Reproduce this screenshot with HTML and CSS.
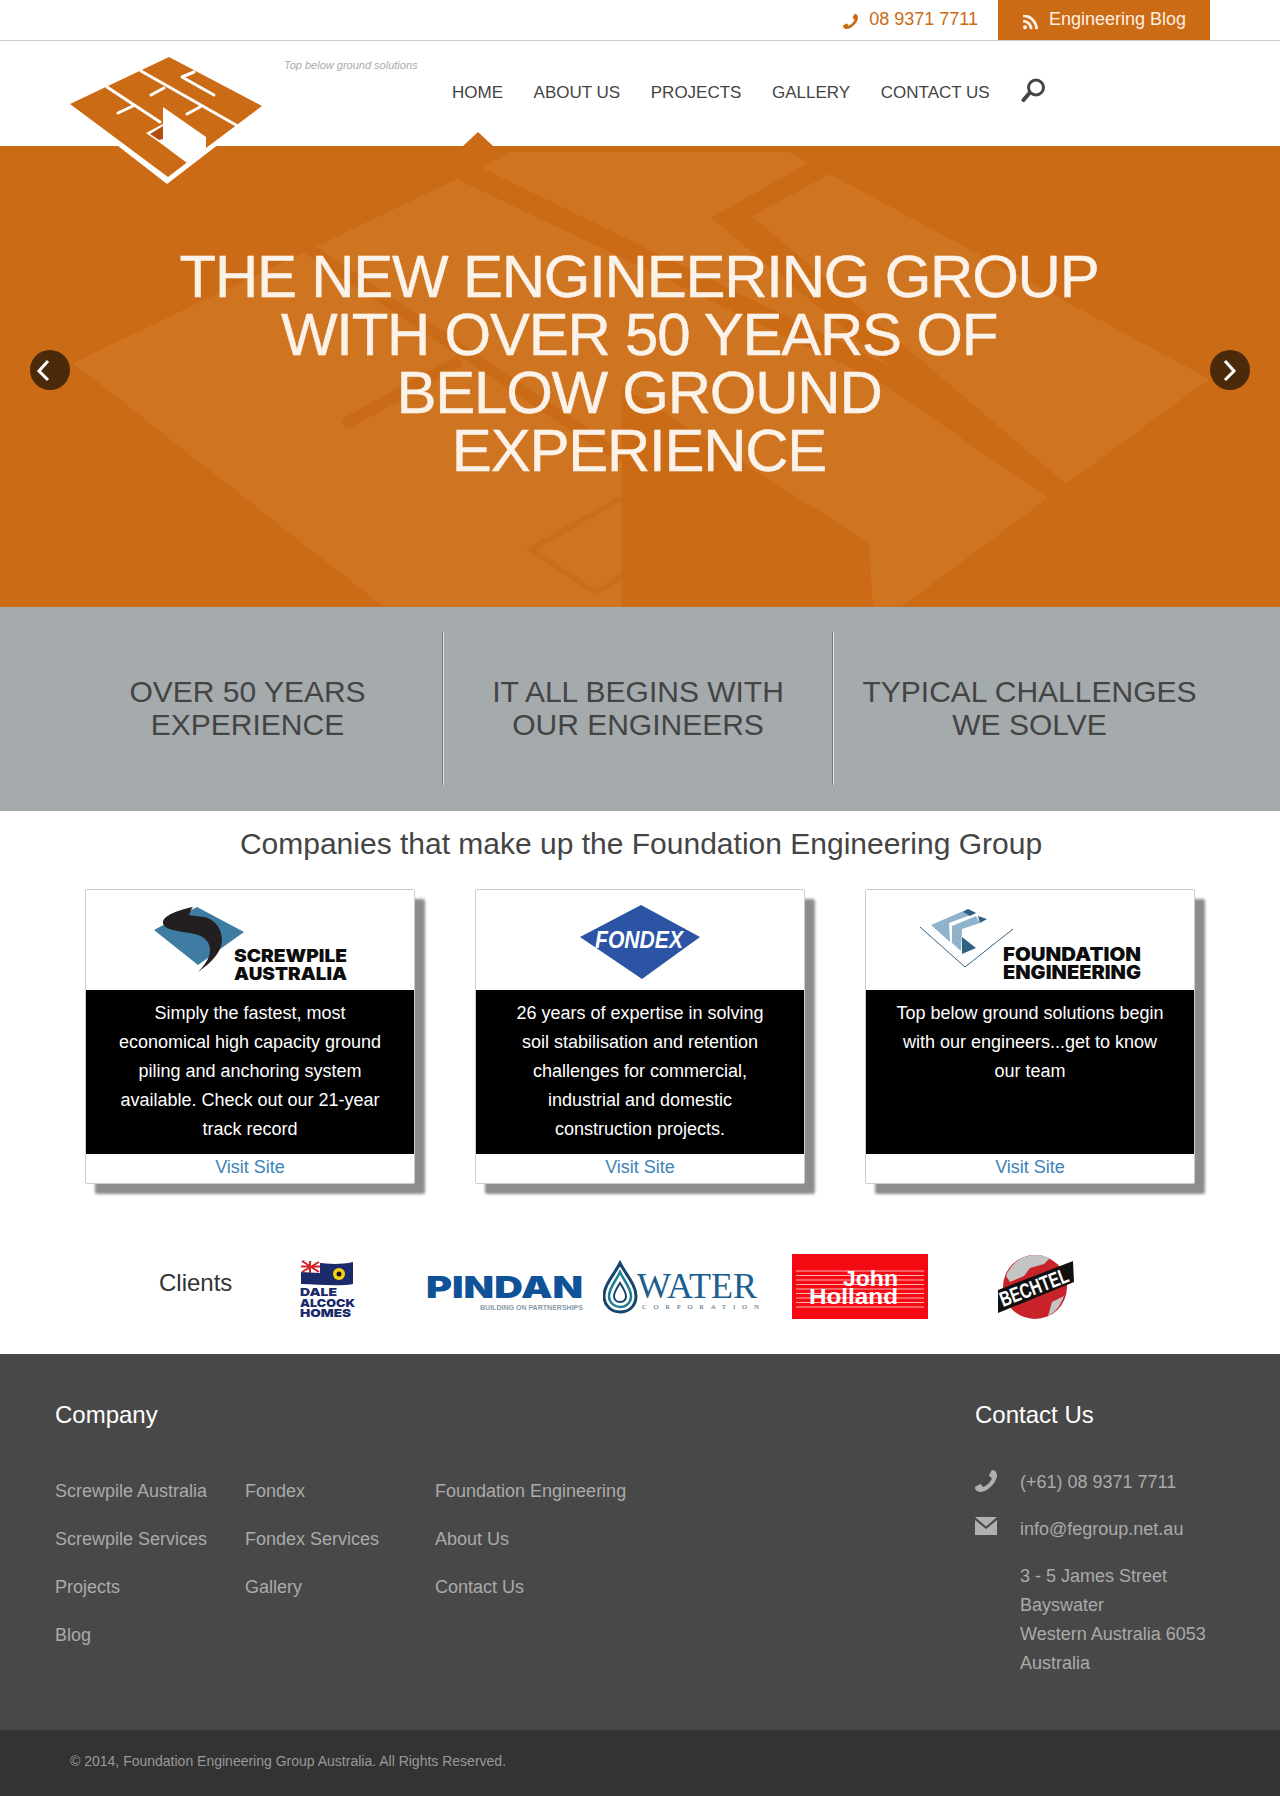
FILE: index.html
```html
<!DOCTYPE html>
<html lang="en">
<head>
<meta charset="utf-8">
<title>Foundation Engineering Group</title>
<link rel="stylesheet" href="styles.css">
</head>
<body>
<header class="header">
  <div class="topbar">
    <a class="top-phone" href="#">
      <svg class="icon-phone-top" viewBox="192 128 1408 1408"><path class="mirror" d="M1600 1240q0 27-10 70.5t-21 68.5q-21 50-122 106-94 51-186 51-27 0-53-3.5t-57.5-12.5-47-14.5-55.5-20.5-49-18q-98-35-175-83-127-79-264-216t-216-264q-48-77-83-175-3-9-18-49t-20.5-55.5-14.5-47-12.5-57.5-3.5-53q0-92 51-186 56-101 106-122 25-11 68.5-21t70.5-10q14 0 21 3 18 6 53 76 11 19 30 54t35 63.5 31 53.5q3 4 17.5 25t21.5 35.5 7 28.5q0 20-28.5 50t-62 55-62 53-28.5 46q0 9 5 22.5t8.5 20.5 14 24 11.5 19q76 137 174 235t235 174q2 1 19 11.5t24 14 20.5 8.5 22.5 5q18 0 46-28.5t53-62 55-62 50-28.5q14 0 28.5 7t35.5 21.5 25 17.5q25 15 53.5 31t63.5 35 54 30q70 35 76 53 3 7 3 21z"/></svg>
      <span>08 9371 7711</span>
    </a>
    <a class="top-blog" href="#">
      <svg class="icon-rss" viewBox="192 192 1408 1408"><path d="M576 1344q0 80-56 136t-136 56-136-56-56-136 56-136 136-56 136 56 56 136zm512 123q2 28-17 48-18 21-47 21h-135q-25 0-43-16.5t-20-41.5q-22-229-184.5-391.5t-391.5-184.5q-25-2-41.5-20t-16.5-43v-135q0-29 21-47 17-17 43-17h5q160 13 306 80.5t259 181.5q114 113 181.5 259t80.5 306zm512 2q2 27-18 47-18 20-46 20h-143q-26 0-44.5-17.5t-19.5-42.5q-12-215-101-408.5t-231.5-336-336-231.5-408.5-102q-25-1-42.5-19.5t-17.5-43.5v-143q0-28 20-46 18-18 44-18h3q262 13 501.5 120t425.5 294q187 186 294 425.5t120 501.5z"/></svg>
      <span>Engineering Blog</span>
    </a>
  </div>
  <div class="navrow">
    <svg class="logo" viewBox="68 55 196 131">
      <polygon class="logo-white" points="100,132 167,184 232,134 169,57"/>
      <polygon class="logo-orange" points="70,104 169,57 262,106 206,148 168,177"/>
      <polygon class="logo-white" points="163,107 206,137 206,148 187,163 159,142 146,133 163,124"/>
      <polygon class="logo-dark" points="150,134 163,126 163,139 159,140"/>
      <path class="logo-slit" d="M141 71 236 125M107 87 160 122M118 113 133 106M151 95 164 88M187 114 200 107M194 72 182 77 214 95"/>
    </svg>
    <p class="tagline">Top below ground solutions</p>
    <nav class="nav">
      <a class="nav-link active" href="#">HOME</a>
      <a class="nav-link" href="#">ABOUT US</a>
      <a class="nav-link" href="#">PROJECTS</a>
      <a class="nav-link" href="#">GALLERY</a>
      <a class="nav-link" href="#">CONTACT US</a>
      <svg class="icon-search" viewBox="0 0 26 24"><circle cx="16" cy="9.5" r="7.5"/><path d="M9.5 15 3.5 22"/></svg>
    </nav>
  </div>
</header>

<section class="hero">
  <svg class="hero-art" viewBox="0 0 1280 461" preserveAspectRatio="none">
    <polygon class="lit" points="73,217 457,33 622,112 880,236 1048,352 901,461 873,461 869,397 622,240 622,461 384,461"/>
    <polygon class="lit" points="482,22 510,6 788,6 808,17 711,72 892,222"/>
    <polygon class="lit" points="830,28 1209,233 1066,338 752,70"/>
    <path class="cut-thin" d="M622 352 531 403 596 447 622 430"/>
    <path class="cut" d="M300 97 622 312M343 279 460 215"/>
  </svg>
  <h1 class="hero-title">THE NEW ENGINEERING GROUP<br>WITH OVER 50 YEARS OF<br>BELOW GROUND<br>EXPERIENCE</h1>
  <a class="slide-btn prev" href="#"><svg viewBox="0 0 40 40"><path d="M18 11 9 21 18 30"/></svg></a>
  <a class="slide-btn next" href="#"><svg viewBox="0 0 40 40"><path d="M15 11 24 21 15 30"/></svg></a>
</section>

<section class="band">
  <div class="band-col">OVER 50 YEARS<br>EXPERIENCE</div>
  <div class="band-col">IT ALL BEGINS WITH<br>OUR ENGINEERS</div>
  <div class="band-col">TYPICAL CHALLENGES<br>WE SOLVE</div>
</section>

<section class="companies">
  <h2 class="companies-title">Companies that make up the Foundation Engineering Group</h2>
  <div class="cards">
    <article class="card">
      <svg class="card-logo" viewBox="0 0 328 100">
        <polygon fill="#3f7ca3" points="68,40 111,17 158,42 112,75"/>
        <path fill="#231f20" d="M107 17C92 20 76 26 77 33 78 40 92 41 104 43 116 45 124 50 124 60 124 68 118 76 112 82 124 74 136 62 136 50 136 38 128 29 118 27 112 26 106 26 103 25 104 22 105 19 107 17Z"/>
        <text class="logo-heavy" x="148" y="72" font-size="18" textLength="113" lengthAdjust="spacingAndGlyphs">SCREWPILE</text>
        <text class="logo-heavy" x="148" y="90" font-size="18" textLength="113" lengthAdjust="spacingAndGlyphs">AUSTRALIA</text>
      </svg>
      <p class="card-text">Simply the fastest, most economical high capacity ground piling and anchoring system available. Check out our 21-year track record</p>
      <a class="card-link" href="#">Visit Site</a>
    </article>
    <article class="card">
      <svg class="card-logo" viewBox="0 0 328 100">
        <polygon fill="#2c54a5" points="104,47 165,15 224,47 166,89"/>
        <text class="logo-fondex" x="119" y="58" font-size="23" textLength="88" lengthAdjust="spacingAndGlyphs">FONDEX</text>
      </svg>
      <p class="card-text">26 years of expertise in solving soil stabilisation and retention challenges for commercial, industrial and domestic construction projects.</p>
      <a class="card-link" href="#">Visit Site</a>
    </article>
    <article class="card">
      <svg class="card-logo" viewBox="0 0 328 100">
        <path fill="none" stroke="#2f5f80" stroke-width="1" d="M54 37 99 77 147 39"/>
        <polygon fill="#8fb3cb" points="65,35 102,19 110,23 83,33 84,52"/>
        <polygon fill="#8fb3cb" points="86,36 110,26 114,33 96,39 95,61 86,53"/>
        <polygon fill="#2f6183" points="96,47 110,58 96,64"/>
        <polygon fill="#2f6183" points="112,26 121,29 114,33"/>
        <polygon fill="#2f6183" points="102,19 110,23 104,26 97,22"/>
        <text class="logo-heavy" x="137" y="71" font-size="19" textLength="138" lengthAdjust="spacingAndGlyphs">FOUNDATION</text>
        <text class="logo-heavy" x="137" y="89" font-size="19" textLength="138" lengthAdjust="spacingAndGlyphs">ENGINEERING</text>
      </svg>
      <p class="card-text">Top below ground solutions begin with our engineers...get to know our team</p>
      <a class="card-link" href="#">Visit Site</a>
    </article>
  </div>
</section>

<section class="clients">
  <h3 class="clients-title">Clients</h3>
  <svg class="client client-dale" viewBox="296 1250 64 70">
    <path fill="#1b2a6b" d="M301 1260C318 1263 335 1266 353 1262V1284C336 1287 318 1284 301 1284Z"/>
    <path fill="#fff" d="M301 1260 320 1263V1273L301 1272Z"/>
    <path stroke="#d2232a" stroke-width="2" d="M301 1266.500H320M310 1261V1273M302 1261 319 1272M319 1262 302 1272"/>
    <circle cx="339" cy="1274" r="6" fill="#f6d10f"/>
    <circle cx="339" cy="1274" r="2.500" fill="#111"/>
    <text class="logo-navy" x="300" y="1296" font-size="11" textLength="37" lengthAdjust="spacingAndGlyphs">DALE</text>
    <text class="logo-navy" x="300" y="1306.500" font-size="11" textLength="55" lengthAdjust="spacingAndGlyphs">ALCOCK</text>
    <text class="logo-navy" x="300" y="1316.500" font-size="11" textLength="51" lengthAdjust="spacingAndGlyphs">HOMES</text>
  </svg>
  <svg class="client client-pindan" viewBox="426 1250 158 70">
    <text class="logo-pindan" x="426" y="1298" font-size="30" textLength="157" lengthAdjust="spacingAndGlyphs">PINDAN</text>
    <text class="logo-pindan-sub" x="480" y="1309.500" font-size="7" textLength="103" lengthAdjust="spacingAndGlyphs">BUILDING ON PARTNERSHIPS</text>
  </svg>
  <svg class="client client-water" viewBox="603 1250 158 70">
    <path fill="none" stroke="#17456f" stroke-width="3" d="M620 1263C614 1275 604 1285 604 1296 604 1306 612 1312 620 1312 629 1312 636 1306 636 1296 636 1285 626 1275 620 1263Z"/>
    <path fill="none" stroke="#1f7e95" stroke-width="2.500" d="M620 1272C616 1281 609 1288 609 1296 609 1303 615 1307 620 1307 626 1307 631 1303 631 1296 631 1288 624 1281 620 1272Z"/>
    <path fill="none" stroke="#17456f" stroke-width="2" d="M620 1283C617 1288 614 1292 614 1296 614 1300 617 1302 620 1302 624 1302 626 1300 626 1296 626 1292 623 1288 620 1283Z"/>
    <text class="logo-water" x="637" y="1298" font-size="36" textLength="120" lengthAdjust="spacingAndGlyphs">WATER</text>
    <text class="logo-water-sub" x="642" y="1308.500" font-size="7" textLength="117">CORPORATION</text>
  </svg>
  <svg class="client client-holland" viewBox="792 1250 136 70">
    <rect x="792" y="1254" width="136" height="65" fill="#f50a14"/>
    <path stroke="#fbb6b6" stroke-width="1" d="M796 1271H924M796 1275.500H924M796 1280H924M796 1284.500H924M796 1289H924M796 1293.500H924M796 1298H924M796 1302.500H924M796 1307H924"/>
    <text class="logo-holland" x="843" y="1285.500" font-size="22" textLength="55" lengthAdjust="spacingAndGlyphs">John</text>
    <text class="logo-holland" x="809" y="1304" font-size="22" textLength="89" lengthAdjust="spacingAndGlyphs">Holland</text>
  </svg>
  <svg class="client client-bechtel" viewBox="996 1250 80 70">
    <circle cx="1035" cy="1287" r="32" fill="#c8232a"/>
    <path fill="#c4c4c4" d="M1022 1258C1030 1254 1042 1254 1050 1258L1044 1264 1030 1268 1024 1276 1010 1282 1006 1276C1008 1270 1014 1262 1022 1258ZM1052 1302 1064 1296C1060 1306 1056 1312 1048 1316Z"/>
    <polygon fill="#111" points="998,1290 1073,1261 1074,1282 998,1313"/>
    <text class="logo-bechtel" x="1003" y="1307" font-size="21" textLength="72" lengthAdjust="spacingAndGlyphs" transform="rotate(-21 1003 1307)">BECHTEL</text>
  </svg>
</section>

<footer class="footer">
  <div class="footer-main">
    <div class="footer-company">
      <h4 class="footer-heading">Company</h4>
      <ul class="footer-links">
        <li><a href="#">Screwpile Australia</a></li>
        <li><a href="#">Fondex</a></li>
        <li><a href="#">Foundation Engineering</a></li>
        <li><a href="#">Screwpile Services</a></li>
        <li><a href="#">Fondex Services</a></li>
        <li><a href="#">About Us</a></li>
        <li><a href="#">Projects</a></li>
        <li><a href="#">Gallery</a></li>
        <li><a href="#">Contact Us</a></li>
        <li><a href="#">Blog</a></li>
      </ul>
    </div>
    <div class="footer-contact">
      <h4 class="footer-heading">Contact Us</h4>
      <div class="contact-row">
        <svg class="contact-icon" viewBox="192 128 1408 1408"><path class="mirror" d="M1600 1240q0 27-10 70.5t-21 68.5q-21 50-122 106-94 51-186 51-27 0-53-3.5t-57.5-12.5-47-14.5-55.5-20.5-49-18q-98-35-175-83-127-79-264-216t-216-264q-48-77-83-175-3-9-18-49t-20.5-55.5-14.5-47-12.5-57.5-3.5-53q0-92 51-186 56-101 106-122 25-11 68.5-21t70.5-10q14 0 21 3 18 6 53 76 11 19 30 54t35 63.5 31 53.5q3 4 17.5 25t21.5 35.5 7 28.5q0 20-28.5 50t-62 55-62 53-28.5 46q0 9 5 22.5t8.5 20.5 14 24 11.5 19q76 137 174 235t235 174q2 1 19 11.5t24 14 20.5 8.5 22.5 5q18 0 46-28.5t53-62 55-62 50-28.5q14 0 28.5 7t35.5 21.5 25 17.5q25 15 53.5 31t63.5 35 54 30q70 35 76 53 3 7 3 21z"/></svg>
        <span>(+61) 08 9371 7711</span>
      </div>
      <div class="contact-row">
        <svg class="contact-icon mail" viewBox="0 0 22 18"><path d="M0 0H22L11 9.500ZM0 3 11 12 22 3V18H0Z"/></svg>
        <span>info@fegroup.net.au</span>
      </div>
      <div class="contact-row">
        <span class="contact-spacer"></span>
        <span>3 - 5 James Street<br>Bayswater<br>Western Australia 6053<br>Australia</span>
      </div>
    </div>
  </div>
  <div class="footer-bottom">© 2014, Foundation Engineering Group Australia. All Rights Reserved.</div>
</footer>
</body>
</html>
```
FILE: styles.css
```css
* { box-sizing: border-box; }
html, body { margin: 0; padding: 0; }
body { font-family: "Liberation Sans", Arial, sans-serif; color: #444; background: #fff; width: 1280px; overflow-x: hidden; }
a { color: inherit; text-decoration: none; }
h1, h2, h3, h4, p, ul { margin: 0; padding: 0; font-weight: 400; }
ul { list-style: none; }
svg { display: block; }

.header { position: relative; z-index: 2; }
.topbar { height: 41px; border-bottom: 1px solid #ccc; display: flex; justify-content: flex-end; align-items: flex-start; padding-right: 70px; }
.top-phone { display: flex; align-items: center; gap: 11px; height: 40px; padding-bottom: 2px; color: #cb6b15; font-size: 18px; margin-right: 20px; }
.icon-phone-top { width: 15px; height: 15px; fill: #cb6b15; margin-top: 4px; }
.mirror { transform: scaleX(-1); transform-origin: 896px 896px; }
.top-blog { display: flex; align-items: center; gap: 11px; width: 212px; height: 40px; padding: 0 0 2px 25px; background: #cb6b15; color: #fbeee0; font-size: 18px; }
.icon-rss { width: 15px; height: 15px; fill: #fbeee0; margin-top: 7px; }

.navrow { position: relative; height: 105px; }
.logo { position: absolute; left: 68px; top: 14px; width: 196px; height: 131px; }
.logo-white { fill: #fff; }
.logo-orange { fill: #cb6b15; }
.logo-dark { fill: #b24e10; }
.logo-slit { fill: none; stroke: #fff; stroke-width: 3; stroke-linecap: round; stroke-linejoin: round; }
.tagline { position: absolute; left: 284px; top: 17px; font-size: 11px; line-height: 14px; font-style: italic; color: #aaa; }

.nav { display: flex; align-items: flex-start; gap: 30.6px; padding: 37px 0 0 452px; }
.nav-link { position: relative; margin-top: 5px; font-size: 17px; line-height: 20px; color: #444; }
.nav-link.active::after { content: ""; position: absolute; left: 50%; top: 49px; margin-left: -15px; border-left: 15px solid transparent; border-right: 15px solid transparent; border-bottom: 14px solid #cb6b15; }
.icon-search { width: 26px; height: 24px; fill: none; stroke: #444; }
.icon-search circle { stroke-width: 3; }
.icon-search path { stroke-width: 4; stroke-linecap: round; }

.hero { position: relative; height: 461px; background: #cb6b15; padding-top: 102px; overflow: hidden; }
.hero-art { position: absolute; left: 0; top: 0; width: 1280px; height: 461px; }
.lit { fill: #cf7521; }
.cut { fill: none; stroke: #ca6c17; stroke-width: 12; }
.cut-thin { fill: none; stroke: #cb6e19; stroke-width: 6; }
.hero-title { position: relative; width: 1278px; text-align: center; font-size: 60px; line-height: 58px; letter-spacing: -1.25px; color: #fbf3ea; -webkit-text-stroke: 0.4px #fbf3ea; }
.slide-btn { position: absolute; top: 204px; width: 40px; height: 40px; border-radius: 50%; background: #4b2a0b; }
.slide-btn svg { width: 40px; height: 40px; fill: none; stroke: #fff; stroke-width: 3; }
.prev { left: 30px; }
.next { left: 1210px; }

.band { height: 204px; background: #a5aaad; padding: 25px 0 26px 53px; display: flex; }
.band-col { width: 390px; height: 153px; display: flex; align-items: center; justify-content: center; text-align: center; font-size: 30px; line-height: 33px; padding-bottom: 2px; color: #444; }
.band-col:nth-child(-n+2) { border-right: 1px solid #757b7f; box-shadow: 1px 0 0 #e0e2e3; }
.band-col:nth-child(2) { padding-left: 1px; }
.band-col:nth-child(3) { padding-left: 3px; }

.companies { padding-top: 15px; }
.companies-title { font-size: 30px; line-height: 36px; text-align: center; padding-left: 2px; color: #444; }
.cards { display: grid; grid-template-columns: repeat(3, 330px); gap: 60px; padding: 27px 0 0 85px; }
.card { height: 295px; border: 1px solid #ccc; border-radius: 2px; background: #fff; box-shadow: 10px 10px 3px #8c8c8c; display: flex; flex-direction: column; }
.card-logo { width: 328px; height: 100px; flex: none; }
.logo-heavy { font-family: Inter, "Liberation Sans", sans-serif; font-weight: 900; fill: #0c0c0c; }
.logo-fondex { font-family: "Liberation Sans", sans-serif; font-weight: 700; font-style: italic; fill: #fff; }
.card-text { height: 164px; flex: none; background: #000; color: #fff; padding: 9px 25px 0; text-align: center; font-size: 18px; line-height: 29px; }
.card-link { height: 29px; text-align: center; color: #3c83b8; font-size: 18px; line-height: 26px; }

.clients { height: 170px; padding-top: 66px; display: grid; grid-template-columns: 137px 130px 177px 189px 204px 80px; padding-left: 159px; align-items: start; }
.clients-title { font-size: 24px; line-height: 66px; color: #333; }
.client { height: 70px; }
.client-dale { width: 64px; }
.client-pindan { width: 158px; }
.client-water { width: 158px; }
.client-holland { width: 136px; }
.client-bechtel { width: 80px; }
.logo-navy { font-family: Inter, "Liberation Sans", sans-serif; font-weight: 900; fill: #1b2a6b; }
.logo-pindan { font-family: Inter, "Liberation Sans", sans-serif; font-weight: 900; fill: #0f5298; }
.logo-pindan-sub { font-family: "Liberation Sans", sans-serif; font-weight: 700; fill: #8a9bab; }
.logo-water { font-family: "Liberation Serif", serif; fill: #1c5f8f; }
.logo-water-sub { font-family: "Liberation Serif", serif; fill: #44667c; }
.logo-holland { font-family: "Liberation Sans", sans-serif; font-weight: 700; fill: #fff; }
.logo-bechtel { font-family: "Liberation Sans", sans-serif; font-weight: 700; fill: #fff; }

.footer { background: #484848; }
.footer-main { height: 376px; padding: 46px 0 0 55px; display: flex; justify-content: space-between; }
.footer-heading { font-size: 24px; line-height: 30px; color: #fff; }
.footer-links { display: grid; grid-template-columns: repeat(3, 190px); grid-auto-rows: 48px; margin-top: 37px; font-size: 18px; color: #aaa; line-height: 48px; white-space: nowrap; }
.footer-links li:nth-child(10) { grid-column: 1; }
.footer-contact { width: 305px; }
.footer-contact .footer-heading { margin-bottom: 38px; }
.contact-row { display: flex; gap: 23px; font-size: 18px; line-height: 29px; color: #aaa; margin-bottom: 18px; }
.contact-icon { width: 22px; height: 22px; fill: #b0b0b0; flex: none; margin-top: 2px; }
.contact-icon.mail { height: 18px; }
.contact-spacer { width: 22px; flex: none; }
.footer-bottom { height: 66px; background: #333; padding-left: 70px; font-size: 14px; line-height: 62px; color: #999; }
```
